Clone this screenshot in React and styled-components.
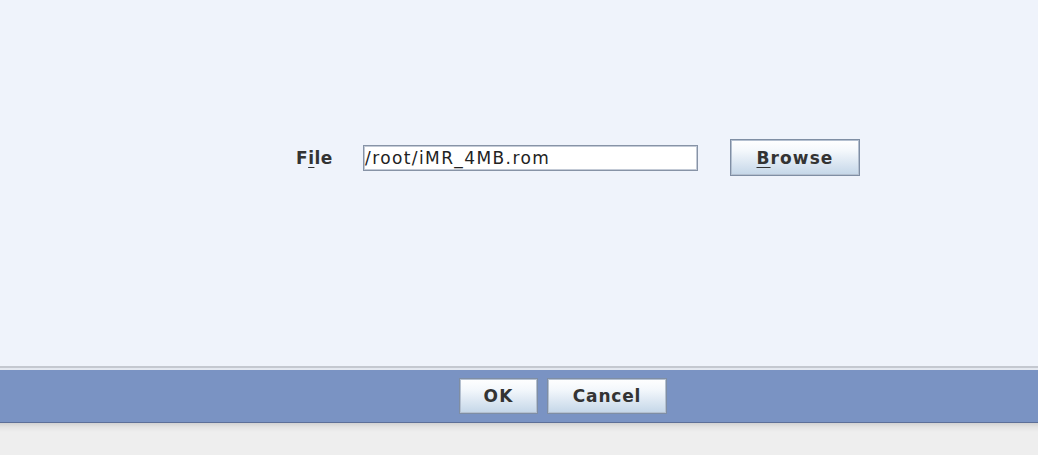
import React from 'react';
import styled, { createGlobalStyle } from 'styled-components';

const GlobalStyle = createGlobalStyle`
    html, body {
        margin: 0;
        padding: 0;
        background: #eeeeee;
    }
    body {
        font-family: "DejaVu Sans", "Liberation Sans", sans-serif;
        width: 1038px;
        height: 455px;
        overflow: hidden;
    }
`;

const Window = styled.div`
    display: flex;
    flex-direction: column;
    width: 1038px;
    height: 455px;
`;

const Content = styled.div`
    height: 366px;
    background: #eff3fb;
    display: flex;
    flex-direction: column;
    padding-top: 139px;
    box-sizing: border-box;
`;

const FormRow = styled.div`
    display: flex;
    align-items: center;
    padding-left: 296px;
    height: 37px;
`;

const Label = styled.label`
    font-weight: bold;
    font-size: 17px;
    letter-spacing: 0.5px;
    color: #333333;
    width: 67px;
    u {
        text-decoration-thickness: 1px;
        text-underline-offset: 3px;
    }
`;

const TextField = styled.div`
    width: 335px;
    height: 26px;
    box-sizing: border-box;
    border: 1px solid #8793a6;
    box-shadow: inset 0 0 0 1px #c3cad6;
    background: #ffffff;
    display: flex;
    align-items: center;
    padding-left: 1px;
    font-size: 17px;
    letter-spacing: 1.4px;
    color: #222222;
    margin-right: 32px;
`;

const Button = styled.button`
    width: ${props => props.w}px;
    height: ${props => props.h || 36}px;
    box-sizing: border-box;
    border: 1px solid #7f8ea4;
    box-shadow: inset 0 0 0 1px #b4c0d0;
    background: linear-gradient(to bottom, #ffffff 0%, #f4f8fc 30%, #c4d6e8 100%);
    font-family: "DejaVu Sans", "Liberation Sans", sans-serif;
    font-weight: bold;
    font-size: 17px;
    letter-spacing: ${props => props.ls || 1}px;
    color: #333333;
    padding: 0;
    display: flex;
    align-items: center;
    justify-content: center;
    u {
        text-decoration-thickness: 1px;
        text-underline-offset: 3px;
    }
`;

const Separator = styled.div`
    height: 4px;
    border-top: 2px solid #c4c8d0;
    background: #e4e8f0;
    box-sizing: border-box;
`;

const ButtonBar = styled.div`
    height: 52px;
    background: #7a93c3;
    border-bottom: 1px solid #5d6f98;
    display: flex;
    align-items: center;
    padding-left: 459px;
    gap: 9px;
`;

const Below = styled.div`
    flex: 1;
    background: linear-gradient(to bottom, #d2d2d2 0px, #e4e4e4 4px, #eeeeee 9px, #eeeeee 100%);
`;

export default function App() {
    return (
        <Window>
            <GlobalStyle />
            <Content>
                <FormRow>
                    <Label>F<u>i</u>le</Label>
                    <TextField>/root/iMR_4MB.rom</TextField>
                    <Button w={130} h={37} ls={1.1}><u>B</u>rowse</Button>
                </FormRow>
            </Content>
            <Separator />
            <ButtonBar>
                <Button w={79} ls={1.2}>OK</Button>
                <Button w={120} ls={0.8}>Cancel</Button>
            </ButtonBar>
            <Below />
        </Window>
    );
}
